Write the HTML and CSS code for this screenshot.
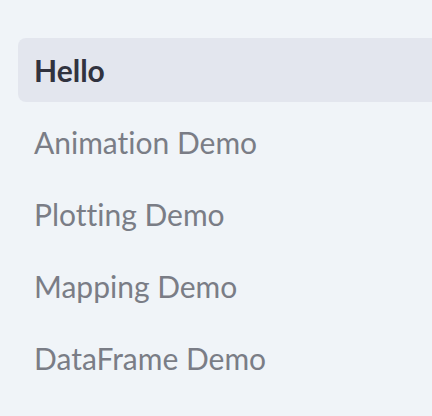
FILE: index.html
```html
<!DOCTYPE html>
<html lang="en">
<head>
    <meta charset="UTF-8">
    <meta name="viewport" content="width=device-width, initial-scale=1.0">
    <title>Hello</title>
    <link rel="stylesheet" href="styles.css">
</head>
<body>
    <!-- Navegación lateral de páginas -->
    <nav class="sidebar-nav">
        <ul class="nav-list">
            <li><a class="nav-link active" href="#">Hello</a></li>
            <li><a class="nav-link" href="#">Animation Demo</a></li>
            <li><a class="nav-link" href="#">Plotting Demo</a></li>
            <li><a class="nav-link" href="#">Mapping Demo</a></li>
            <li><a class="nav-link" href="#">DataFrame Demo</a></li>
        </ul>
    </nav>
</body>
</html>
```

FILE: styles.css
```css
body {
    margin: 0;
    background-color: #f0f4f8;
    font-family: 'Source Sans Pro', 'Lato', 'Noto Sans', sans-serif;
    font-variant-ligatures: none;
}
.sidebar-nav {
    padding: 38px 0 0 18px;
}
.nav-list {
    list-style: none;
    margin: 0;
    padding: 0;
    display: flex;
    flex-direction: column;
    gap: 8px;
}
.nav-link {
    display: flex;
    align-items: center;
    height: 64px;
    padding-left: 16px;
    border-radius: 8px 0 0 8px;
    font-size: 30px;
    color: #7a7d86;
    text-decoration: none;
}
.nav-link.active {
    background-color: #e3e6ee;
    color: #31333f;
    font-weight: 700;
}
```
